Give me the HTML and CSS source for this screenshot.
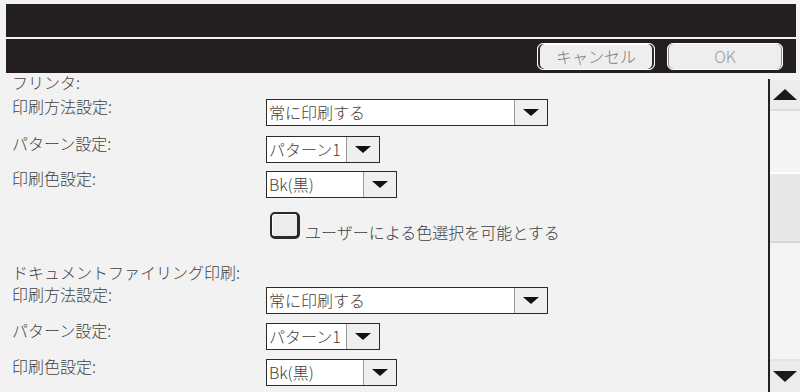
FILE: index.html
```html
<!DOCTYPE html>
<html lang="ja">
<head>
<meta charset="utf-8">
<title>印刷設定</title>
<link rel="stylesheet" href="styles.css">
</head>
<body>
<div class="screen">
  <div class="titlebar"></div>
  <div class="toolbar">
    <button class="btn cancel">キャンセル</button>
    <button class="btn ok">OK</button>
  </div>
  <div class="body">
    <div class="content">
      <div class="section-title first">フリンタ:</div>
      <div class="row r1">
        <div class="label">印刷方法設定:</div>
        <div class="select wide"><span class="value">常に印刷する</span><span class="arrow"><i class="tri"></i></span></div>
      </div>
      <div class="row r2">
        <div class="label">パターン設定:</div>
        <div class="select pattern"><span class="value">パターン1</span><span class="arrow"><i class="tri"></i></span></div>
      </div>
      <div class="row r3">
        <div class="label">印刷色設定:</div>
        <div class="select color"><span class="value">Bk(黒)</span><span class="arrow"><i class="tri"></i></span></div>
      </div>
      <div class="check-row">
        <span class="checkbox"></span>
        <span class="check-label">ユーザーによる色選択を可能とする</span>
      </div>
      <div class="section-title second">ドキュメントファイリング印刷:</div>
      <div class="row s1">
        <div class="label">印刷方法設定:</div>
        <div class="select wide"><span class="value">常に印刷する</span><span class="arrow"><i class="tri"></i></span></div>
      </div>
      <div class="row s2">
        <div class="label">パターン設定:</div>
        <div class="select pattern"><span class="value">パターン1</span><span class="arrow"><i class="tri"></i></span></div>
      </div>
      <div class="row s3">
        <div class="label">印刷色設定:</div>
        <div class="select color"><span class="value">Bk(黒)</span><span class="arrow"><i class="tri"></i></span></div>
      </div>
    </div>
    <div class="scrollbar">
      <div class="sb-btn up"><i class="tri-up"></i></div>
      <div class="sb-gap top"></div>
      <div class="sb-thumb"></div>
      <div class="sb-gap rest"></div>
      <div class="sb-btn down"><i class="tri-down"></i></div>
    </div>
  </div>
</div>
</body>
</html>
```
FILE: styles.css
```css
* { box-sizing: border-box; }

html, body {
  margin: 0;
  padding: 0;
}

body {
  width: 800px;
  height: 392px;
  overflow: hidden;
  background: #f2f2f2;
  font-family: "Noto Sans CJK JP", "Noto Sans", sans-serif;
  font-weight: 300;
  font-size: 16px;
  color: #404040;
}

.screen {
  display: flex;
  flex-direction: column;
  height: 392px;
}

.titlebar {
  margin: 4px 4px 0 6px;
  height: 33px;
  background: #231f20;
}

.toolbar {
  margin: 2px 4px 0 6px;
  height: 34px;
  background: #231f20;
  display: flex;
  justify-content: flex-end;
  align-items: center;
  gap: 12px;
  padding: 1px 13px 0 0;
}

.btn {
  height: 27px;
  width: 118px;
  border: 1px solid #ffffff;
  border-radius: 6px;
  background: #eeeeee;
  box-shadow: inset 2px 0 0 #2a2a2a, inset -2px 0 0 #2a2a2a, inset 0 1px 0 #ffffff;
  font-family: "Noto Sans CJK JP", "Noto Sans", sans-serif;
  font-weight: 300;
  font-size: 16px;
  line-height: 23px;
  padding: 0;
  color: #7a7a7a;
}

.btn.ok {
  width: 116px;
  color: #9a9a9a;
  box-shadow: inset 1px 0 0 #888, inset -1px 0 0 #888;
}

.body {
  flex: 1;
  display: flex;
  min-height: 0;
}

.content {
  flex: 1;
  padding-left: 12px;
}

.section-title {
  line-height: 18px;
  height: 18px;
  white-space: nowrap;
}

.section-title.second { margin-top: 24px; }

.row {
  display: flex;
  align-items: flex-start;
}

.r1 { margin-top: 8px; }
.r2 { margin-top: 10px; }
.r3 { margin-top: 8px; }
.s1 { margin-top: 6px; }
.s2 { margin-top: 9px; }
.s3 { margin-top: 9px; }

.label {
  width: 254px;
  line-height: 16px;
  margin-top: -1px;
  white-space: nowrap;
}

.select {
  display: flex;
  height: 27px;
  border: 1px solid #2b2b2b;
  background: #ffffff;
}

.select.wide { width: 282px; }
.select.pattern { width: 114px; }
.select.color { width: 131px; }

.select .value {
  flex: 1;
  padding-left: 2px;
  line-height: 25px;
  white-space: nowrap;
  overflow: hidden;
}

.select .arrow {
  width: 33px;
  background: #efefef;
  border-left: 1px solid #9a9a9a;
  display: flex;
  align-items: center;
  justify-content: center;
}

.tri {
  display: block;
  width: 0;
  height: 0;
  border-left: 8px solid transparent;
  border-right: 8px solid transparent;
  border-top: 7px solid #111111;
}

.check-row {
  margin-top: 14px;
  padding-left: 258px;
  display: flex;
  align-items: flex-end;
  gap: 5px;
  height: 27px;
}

.checkbox {
  width: 30px;
  height: 27px;
  border-radius: 5px;
  border: 2px solid #2a2a2a;
  border-right-width: 3px;
  border-bottom-width: 3px;
  background: #ececec;
  box-shadow: inset 1px 1px 0 #ffffff;
}

.check-label {
  line-height: 16px;
  margin-bottom: -1px;
  white-space: nowrap;
}

.scrollbar {
  width: 32px;
  margin-top: 6px;
  border-left: 2px solid #222222;
  background: #f4f4f4;
  display: flex;
  flex-direction: column;
}

.sb-btn {
  background: #ececec;
  display: flex;
  align-items: center;
  justify-content: center;
}

.sb-btn.up {
  height: 31px;
  margin-top: 1px;
  border-bottom: 2px solid #dddddd;
}

.sb-btn.down {
  height: 33px;
  border-top: 2px solid #e4e4e4;
}

.sb-gap.top { height: 61px; }
.sb-gap.rest { flex: 1; }

.sb-thumb {
  height: 71px;
  background: #e8e8e8;
  border-top: 2px solid #ffffff;
  border-bottom: 2px solid #d8d8d8;
}

.tri-up {
  display: block;
  width: 0;
  height: 0;
  border-left: 12px solid transparent;
  border-right: 12px solid transparent;
  border-bottom: 11px solid #1a1a1a;
}

.tri-down {
  display: block;
  width: 0;
  height: 0;
  border-left: 12px solid transparent;
  border-right: 12px solid transparent;
  border-top: 11px solid #1a1a1a;
}
```
